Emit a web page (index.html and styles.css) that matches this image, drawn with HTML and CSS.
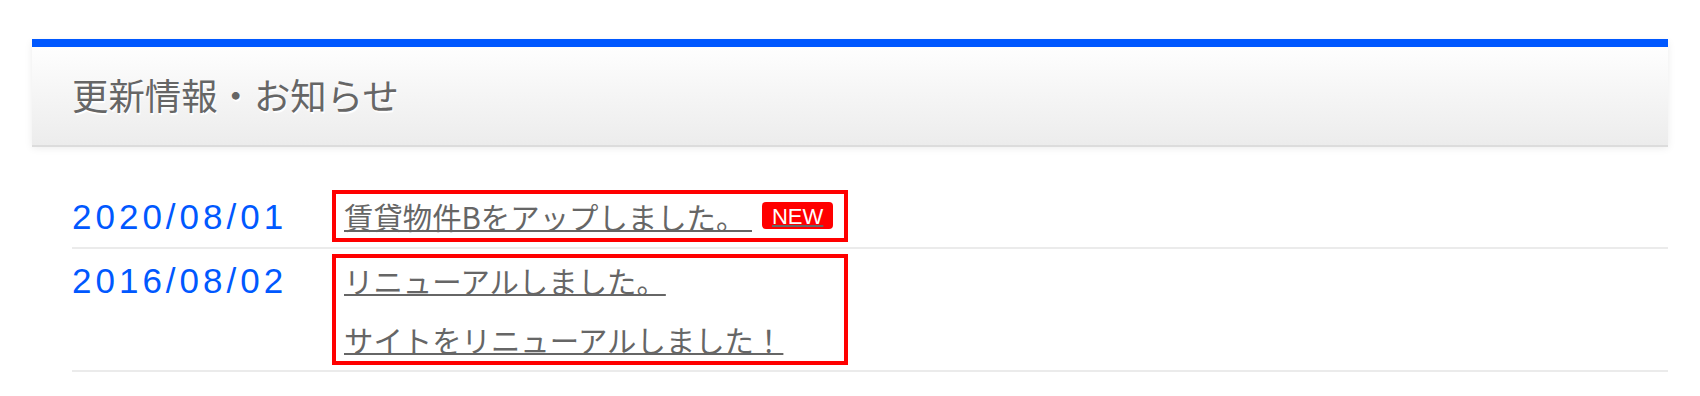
FILE: index.html
```html
<!DOCTYPE html>
<html lang="ja">
<head>
    <meta charset="UTF-8">
    <meta name="viewport" content="width=device-width, initial-scale=1.0">
    <title>更新情報・お知らせ</title>
    <link rel="stylesheet" href="styles.css">
</head>
<body>
    <!-- 更新情報 -->
    <section class="news">
        <h2 class="news-title">更新情報・お知らせ</h2>
        <dl class="news-list">
            <div class="news-row">
                <dt class="news-date">2020/08/01</dt>
                <dd class="news-body">
                    <a href="#" class="news-link">賃貸物件Bをアップしました。 <span class="badge-new">NEW</span></a>
                </dd>
            </div>
            <div class="news-row">
                <dt class="news-date">2016/08/02</dt>
                <dd class="news-body">
                    <a href="#" class="news-link">リニューアルしました。</a>
                    <a href="#" class="news-link">サイトをリニューアルしました！</a>
                </dd>
            </div>
        </dl>
    </section>
</body>
</html>
```

FILE: styles.css
```css
body {
    margin: 0;
    padding: 39px 32px 0;
    background: #fff;
    font-family: "Noto Sans CJK JP", sans-serif;
    color: #666;
}
.news-title {
    margin: 0;
    height: 94px;
    padding: 0 40px 4px;
    box-sizing: content-box;
    display: flex;
    align-items: center;
    border-top: 8px solid #0058ff;
    background: linear-gradient(to bottom, #fefefe 0%, #ececec 100%);
    box-shadow: 0 2px 0 #dcdcdc, 0 3px 8px rgba(0, 0, 0, 0.08);
    font-size: 36.4px;
    font-weight: normal;
    color: #666;
    text-shadow: 1px 2px 1px #fff;
}
.news-list {
    margin: 40px 0 0 40px;
    padding: 0;
}
.news-row {
    display: flex;
    align-items: baseline;
    padding: 5px 0;
    border-bottom: 2px solid #ebebeb;
}
.news-date {
    flex: 0 0 260px;
    font-family: "Liberation Sans", Arial, sans-serif;
    font-size: 35px;
    letter-spacing: 4px;
    color: #0058ff;
}
.news-body {
    margin: 0;
    width: 516px;
    box-sizing: border-box;
    padding: 0 8px;
    border: 4px solid #ff0000;
}
.news-link {
    display: block;
    font-size: 29.4px;
    line-height: 44px;
    color: #666;
    text-decoration: underline;
    text-decoration-thickness: 2px;
}
.news-link + .news-link {
    margin-top: 15px;
}
.badge-new {
    display: inline-block;
    margin-left: 10px;
    padding: 2px 10px 0;
    border-radius: 4px;
    background: #ff0000;
    color: #fff;
    font-family: "Liberation Sans", Arial, sans-serif;
    font-size: 22px;
    line-height: 25px;
    vertical-align: 5px;
    text-decoration: underline #666;
    text-decoration-thickness: 2px;
}
```
